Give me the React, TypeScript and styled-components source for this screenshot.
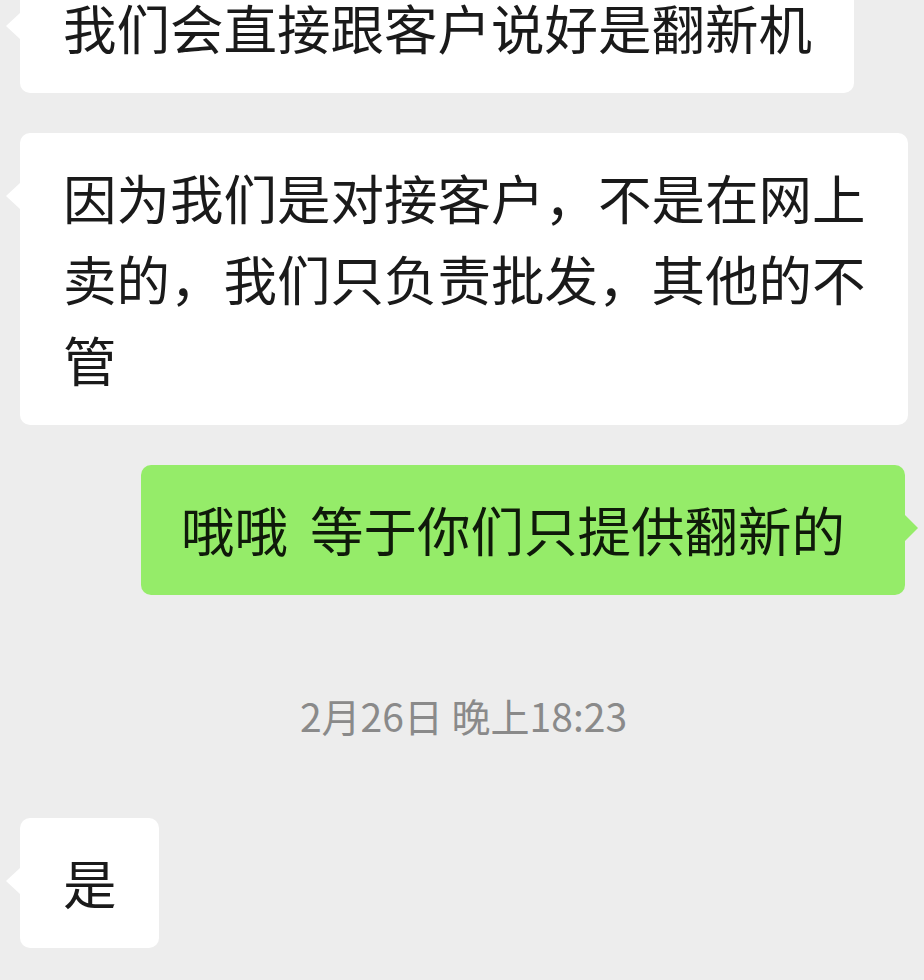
import styled, { createGlobalStyle } from "styled-components";

const GlobalStyle = createGlobalStyle`
  html, body {
    margin: 0;
    padding: 0;
    background: #ededed;
    height: 980px;
    overflow: hidden;
  }
`;

interface Message {
  id: number;
  from: "them" | "me";
  lines: string[];
}

const messages: Message[] = [
  { id: 1, from: "them", lines: ["我们会直接跟客户说好是翻新机"] },
  {
    id: 2,
    from: "them",
    lines: ["因为我们是对接客户，不是在网上", "卖的，我们只负责批发，其他的不", "管"],
  },
  { id: 3, from: "me", lines: ["哦哦 等于你们只提供翻新的"] },
];

const lastMessage: Message = { id: 4, from: "them", lines: ["是"] };

const ChatBubble = ({ message }: { message: Message }) => {
  const mine = message.from === "me";
  return (
    <Row mine={mine}>
      <Bubble mine={mine}>
        {message.lines.map((line, i) => (
          <Line key={i}>{line}</Line>
        ))}
      </Bubble>
    </Row>
  );
};

export default function App() {
  return (
    <>
      <GlobalStyle />
      <Chat>
        <List>
          {messages.map((m) => (
            <ChatBubble key={m.id} message={m} />
          ))}
        </List>
        <TimeStamp>2月26日 晚上18:23</TimeStamp>
        <ChatBubble message={lastMessage} />
      </Chat>
    </>
  );
}

const Chat = styled.main`
  display: flex;
  flex-direction: column;
  padding: 0 19px 0 20px;
  margin-top: -37px;
  font-family: "Noto Sans CJK SC", "Noto Sans", sans-serif;
`;

const List = styled.div`
  display: flex;
  flex-direction: column;
  gap: 40px;
`;

const Row = styled.div<{ mine: boolean }>`
  display: flex;
  justify-content: ${(p) => (p.mine ? "flex-end" : "flex-start")};
`;

const Bubble = styled.div<{ mine: boolean }>`
  position: relative;
  background: ${(p) => (p.mine ? "#95ec69" : "#ffffff")};
  color: ${(p) => (p.mine ? "#0f1a0a" : "#1a1a1a")};
  border-radius: 10px;
  padding: ${(p) => (p.mine ? "23px 60px 26px 40px" : "23px 42px 26px 43px")};
  font-size: 53.5px;
  line-height: 81px;
  word-spacing: ${(p) => (p.mine ? "10px" : "0")};

  &::before {
    content: "";
    position: absolute;
    top: 50px;
    ${(p) => (p.mine ? "right: -13px;" : "left: -14px;")}
    border-top: 13px solid transparent;
    border-bottom: 13px solid transparent;
    ${(p) =>
      p.mine
        ? "border-left: 13px solid #95ec69;"
        : "border-right: 14px solid #ffffff;"}
  }
`;

const Line = styled.div`
  white-space: nowrap;
`;

const TimeStamp = styled.div`
  align-self: center;
  margin: 96px 0 79px;
  font-size: 39px;
  line-height: 48px;
  color: #8a8a8a;
  padding-left: 2px;
`;
